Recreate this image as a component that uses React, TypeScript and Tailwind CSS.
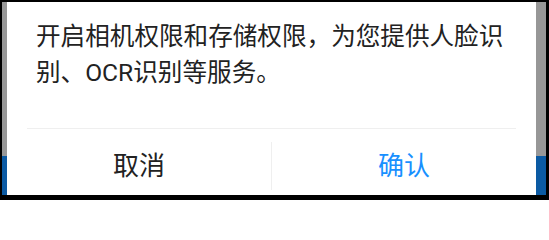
import React from "react";

const FONT = { fontFamily: 'Roboto, "Noto Sans CJK SC", sans-serif' };

export default function App() {
  return (
    <div className="h-[200px] w-[549px] bg-black pb-[5px] pl-[2px] pr-[3px] pt-[2px]" style={FONT}>
      <div className="flex h-full bg-[linear-gradient(to_bottom,#979797_0px,#979797_154px,#0b5aa3_154px)] pl-[5px] pr-[10px]">
        <div className="flex flex-1 flex-col bg-white">
          <p className="px-[29px] pt-[17px] text-[24.6px] leading-[36px] text-[#222]">
            开启相机权限和存储权限，为您提供人脸识别、OCR识别等服务。
          </p>
          <div className="mx-[20px] mt-[37px] h-px bg-[#efefef]" />
          <div className="flex flex-1">
            <button className="flex flex-1 items-center justify-center pt-[8px] text-[26px] text-[#222]">取消</button>
            <div className="mt-[13px] h-[48px] w-px bg-[#efefef]" />
            <button className="flex flex-1 items-center justify-center pt-[8px] text-[26px] text-[#1890ff]">确认</button>
          </div>
        </div>
      </div>
    </div>
  );
}
